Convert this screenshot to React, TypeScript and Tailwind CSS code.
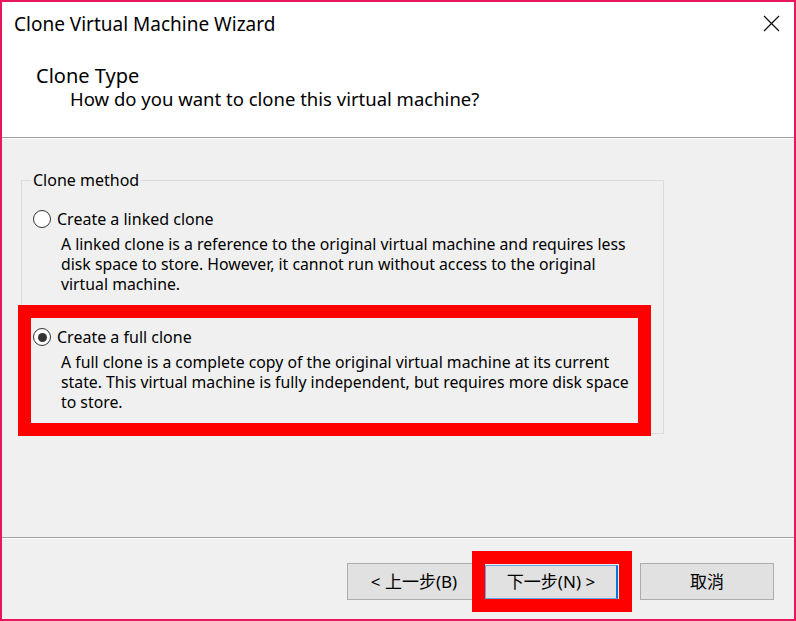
import React, { useState } from 'react';

const FONT = "font-['Noto_Sans','Noto_Sans_CJK_TC',sans-serif]";

type RadioProps = { checked: boolean; onSelect: () => void; label: string; description: string };

const RadioOption: React.FC<RadioProps> = ({ checked, onSelect, label, description }) => {
  return (
    <div className="pl-[2px]">
      <label className="flex items-center h-[20px] gap-[6px] cursor-default" onClick={onSelect}>
        <span className="size-[18px] rounded-full border border-[#333] bg-white flex items-center justify-center shrink-0">
          {checked && <span className="size-[9px] rounded-full bg-[#333]" />}
        </span>
        <span className="text-[16px] leading-[20px]">{label}</span>
      </label>
      <p className="mt-[5px] pl-[28px] w-[605px] text-[15.8px] leading-[20px]">{description}</p>
    </div>
  );
};

const App: React.FC = () => {
  const [method, setMethod] = useState<'linked' | 'full'>('full');

  return (
    <div className={`w-[796px] h-[621px] border-2 border-[#e8175d] bg-[#f0f0f0] flex flex-col text-black ${FONT}`}>
      {/* header */}
      <div className="bg-white h-[135px] shrink-0">
        <div className="flex items-start justify-between pl-[12px] pr-[14px] pt-[10px]">
          <span className="text-[19px] leading-[24px]">Clone Virtual Machine Wizard</span>
          <svg className="mt-[3px]" width="17" height="17" viewBox="0 0 17 17">
            <path d="M1 1 L16 16 M16 1 L1 16" stroke="#111" strokeWidth="1.3" fill="none" />
          </svg>
        </div>
        <div className="pl-[34px] mt-[28px] text-[20px] leading-[24px]">Clone Type</div>
        <div className="pl-[68px] text-[18.5px] leading-[22px]">How do you want to clone this virtual machine?</div>
      </div>
      <div className="h-px bg-[#a0a0a0]" />
      <div className="h-px bg-white" />

      {/* body */}
      <div className="flex-1 pl-[19px] pt-[31px]">
        <fieldset className="w-[643px] h-[264px] border border-[#dcdcdc] pl-[9px] m-0">
          <legend className="ml-0 px-[2px] text-[16px] leading-[20px]">Clone method</legend>
          <div className="mt-[19px]">
            <RadioOption
              checked={method === 'linked'}
              onSelect={() => setMethod('linked')}
              label="Create a linked clone"
              description="A linked clone is a reference to the original virtual machine and requires less disk space to store. However, it cannot run without access to the original virtual machine."
            />
          </div>
          {/* highlighted option */}
          <div className="relative mt-[24px] w-[607px] pt-[9px] pb-[11px]">
            <RadioOption
              checked={method === 'full'}
              onSelect={() => setMethod('full')}
              label="Create a full clone"
              description="A full clone is a complete copy of the original virtual machine at its current state. This virtual machine is fully independent, but requires more disk space to store."
            />
            <div className="absolute -inset-[13px] border-[13px] border-[#ff0000] pointer-events-none" />
          </div>
        </fieldset>
      </div>

      {/* footer */}
      <div className="h-px bg-[#a0a0a0]" />
      <div className="h-px bg-white" />
      <div className="h-[80px] shrink-0 flex items-start justify-end pr-[20px] pt-[24px]">
        <button className="w-[134px] h-[37px] bg-[#e1e1e1] border border-[#adadad] text-[17px]">
          &lt; 上一步(B)
        </button>
        <div className="relative ml-[4px]">
          <button className="w-[133px] h-[34px] mt-[2px] bg-[#e1e1e1] border border-[#5fa6e6] border-r-2 border-r-[#0078d7] text-[17px]">
            下一步(N) &gt;
          </button>
          <div className="absolute -left-[13px] -right-[14px] -top-[12px] -bottom-[13px] border-[13px] border-[#ff0000] pointer-events-none" />
        </div>
        <button className="ml-[22px] w-[134px] h-[37px] bg-[#e1e1e1] border border-[#adadad] text-[17px]">
          取消
        </button>
      </div>
    </div>
  );
};

export default App;
